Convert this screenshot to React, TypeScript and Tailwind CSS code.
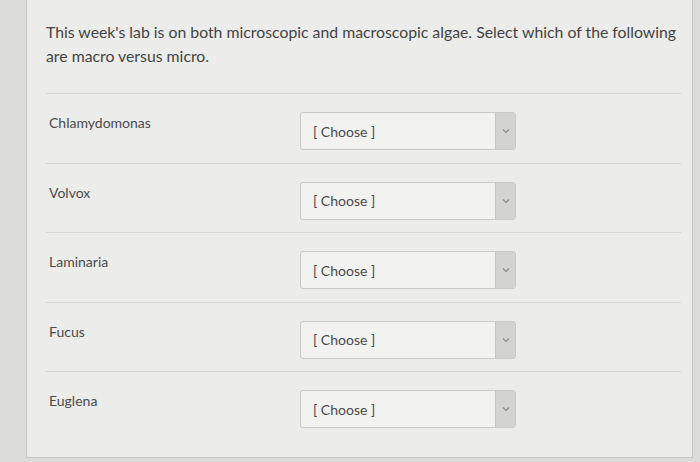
const items = ['Chlamydomonas', 'Volvox', 'Laminaria', 'Fucus', 'Euglena'];

function ChooseSelect() {
  return (
    <div className="flex h-[38px] w-[216px] overflow-hidden rounded-[3px] border border-[#c9c9c7] bg-[#f2f2f0]">
      <div className="flex flex-1 items-center pl-[12px] text-[14px] text-[#4a4a4a]">[ Choose ]</div>
      <div className="flex w-[20px] items-center justify-center border-l border-[#c4c4c2] bg-[#d3d3d1]">
        <svg width="8" height="6" viewBox="0 0 8 6" fill="none">
          <path d="M1 1.5 L4 4.5 L7 1.5" stroke="#8a8a88" strokeWidth="1.1" />
        </svg>
      </div>
    </div>
  );
}

export default function App() {
  return (
    <div className="h-[462px] w-[700px] overflow-hidden bg-[#dcdcda]" style={{ fontFamily: 'Lato, "Open Sans", sans-serif' }}>
      <div className="ml-[26px] h-[458px] w-[667px] border-x border-b border-[#c6c6c4] bg-[#ececea] pl-[19px] pr-[4px] pt-[20px]">
        <p className="w-[646px] text-[15.8px] leading-[24px] text-[#444]">
          This week's lab is on both microscopic and macroscopic algae. Select which of the following are macro versus micro.
        </p>
        <div className="mt-[25px] w-[635px]">
          {items.map((name) => (
            <div key={name} className="flex h-[69.5px] items-start border-t border-[#d6d6d4] pt-[18px]">
              <div className="mt-[1px] w-[254px] pl-[3px] text-[14px] leading-[20px] text-[#4a4a4a]">{name}</div>
              <ChooseSelect />
            </div>
          ))}
        </div>
      </div>
    </div>
  );
}
